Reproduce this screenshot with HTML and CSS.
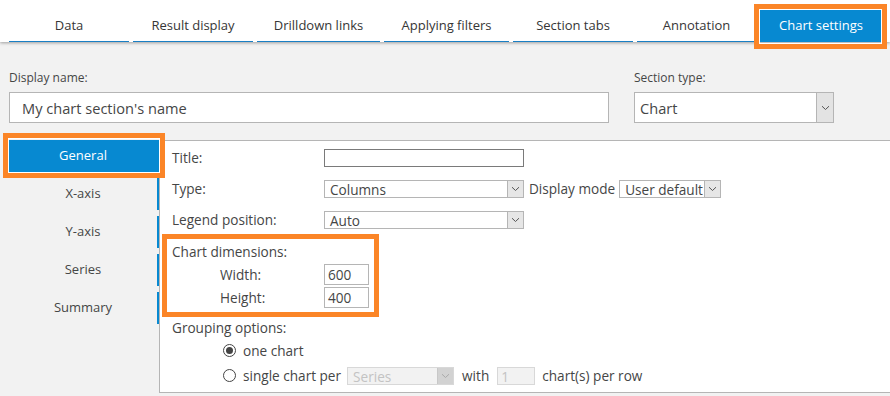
FILE: index.html
```html
<!DOCTYPE html>
<html>
<head>
<meta charset="utf-8">
<title>Chart settings</title>
<link rel="stylesheet" href="styles.css">
</head>
<body>
<div class="tabbar">
  <div class="tab tab-data">Data</div>
  <div class="tab tab-result">Result display</div>
  <div class="tab tab-drill">Drilldown links</div>
  <div class="tab tab-filters">Applying filters</div>
  <div class="tab tab-sections">Section tabs</div>
  <div class="tab tab-annot">Annotation</div>
  <div class="tab tab-chart active highlight">Chart settings</div>
</div>

<div class="page">
  <div class="fields">
    <div class="field name-field">
      <div class="field-label">Display name:</div>
      <div class="big-input">My chart section's name</div>
    </div>
    <div class="field type-field">
      <div class="field-label">Section type:</div>
      <div class="big-select">
        <span class="big-select-value">Chart</span>
        <span class="big-select-btn"><svg width="9" height="6" viewBox="0 0 9 6"><path d="M1 1.2 L4.5 4.5 L8 1.2" fill="none" stroke="#555" stroke-width="1"/></svg></span>
      </div>
    </div>
  </div>

  <div class="main">
    <nav class="sidebar">
      <div class="side-item active highlight-side">General</div>
      <div class="side-item">X-axis</div>
      <div class="side-item">Y-axis</div>
      <div class="side-item">Series</div>
      <div class="side-item">Summary</div>
    </nav>

    <div class="panel">
      <div class="row">
        <span class="row-label">Title:</span>
        <span class="text-input title-input"></span>
      </div>
      <div class="row">
        <span class="row-label">Type:</span>
        <span class="select wide-select">
          <span class="select-value">Columns</span>
          <span class="select-btn"><svg width="9" height="6" viewBox="0 0 9 6"><path d="M1 1.2 L4.5 4.5 L8 1.2" fill="none" stroke="#555" stroke-width="1"/></svg></span>
        </span>
        <span class="inline-label">Display mode</span>
        <span class="select mode-select">
          <span class="select-value">User default</span>
          <span class="select-btn"><svg width="9" height="6" viewBox="0 0 9 6"><path d="M1 1.2 L4.5 4.5 L8 1.2" fill="none" stroke="#555" stroke-width="1"/></svg></span>
        </span>
      </div>
      <div class="row">
        <span class="row-label">Legend position:</span>
        <span class="select wide-select">
          <span class="select-value">Auto</span>
          <span class="select-btn"><svg width="9" height="6" viewBox="0 0 9 6"><path d="M1 1.2 L4.5 4.5 L8 1.2" fill="none" stroke="#555" stroke-width="1"/></svg></span>
        </span>
      </div>

      <div class="dimensions">
        <div class="dim-title">Chart dimensions:</div>
        <div class="dim-row">
          <span class="dim-label">Width:</span>
          <span class="num-input">600</span>
        </div>
        <div class="dim-row dim-row-second">
          <span class="dim-label">Height:</span>
          <span class="num-input">400</span>
        </div>
      </div>

      <div class="group-title">Grouping options:</div>
      <div class="radio-row">
        <span class="radio checked"></span>
        <span>one chart</span>
      </div>
      <div class="radio-row radio-row-last">
        <span class="radio"></span>
        <span>single chart per</span>
        <span class="select disabled-select">
          <span class="select-value">Series</span>
          <span class="select-btn"><svg width="9" height="6" viewBox="0 0 9 6"><path d="M1 1.2 L4.5 4.5 L8 1.2" fill="none" stroke="#aaa" stroke-width="1"/></svg></span>
        </span>
        <span class="with-label">with</span>
        <span class="disabled-input">1</span>
        <span class="per-row">chart(s) per row</span>
      </div>
    </div>
  </div>
</div>
</body>
</html>
```

FILE: styles.css
```css
* {
  box-sizing: border-box;
  margin: 0;
  padding: 0;
}

body {
  font-family: "Open Sans", "Noto Sans", sans-serif;
  color: #454646;
  background: #f2f2f2;
  width: 890px;
  height: 396px;
  overflow: hidden;
}

/* ---------- Tabs ---------- */
.tabbar {
  position: relative;
  z-index: 1;
  height: 42px;
  background: #fff;
  display: flex;
  align-items: flex-end;
  gap: 4px;
  padding-left: 9px;
  box-shadow: 0 1px 3px rgba(0, 0, 0, 0.35);
}

.tab {
  height: 33px;
  border-bottom: 1px solid #1a7fc4;
  display: flex;
  align-items: center;
  justify-content: center;
  font-size: 13px;
  color: #363636;
  white-space: nowrap;
}

.tab-data { width: 120px; }
.tab-result { width: 120px; }
.tab-drill { width: 123px; }
.tab-filters { width: 125px; }
.tab-sections { width: 120px; }
.tab-annot { width: 119px; }
.tab-chart { width: 122px; }

.tab.active {
  background: #0789d1;
  border-bottom-color: #0789d1;
  color: #fff;
}

.highlight {
  position: relative;
}

.highlight::after {
  content: "";
  position: absolute;
  top: -5px;
  left: -6px;
  right: -5px;
  bottom: -8px;
  border: 5px solid #fb8527;
  box-shadow: inset 0 0 0 1px #fff;
}

/* ---------- Header fields ---------- */
.page {
  padding: 29px 0 0 9px;
}

.fields {
  display: flex;
  gap: 25px;
}

.field-label {
  font-size: 12px;
  line-height: 14px;
  height: 14px;
  margin-bottom: 7px;
  color: #454646;
}

.name-field { width: 600px; }
.type-field { width: 200px; }

.big-input {
  height: 31px;
  background: #fff;
  border: 1px solid #b5b5b5;
  font-size: 14.6px;
  padding-left: 12px;
  display: flex;
  align-items: center;
  color: #454646;
}

.big-select {
  height: 31px;
  background: #fff;
  border: 1px solid #b5b5b5;
  display: flex;
}

.big-select-value {
  flex: 1;
  display: flex;
  align-items: center;
  padding-left: 5px;
  font-size: 14.6px;
}

.big-select-btn {
  width: 17px;
  background: #e3e3e3;
  border-left: 1px solid #b5b5b5;
  display: flex;
  align-items: center;
  justify-content: center;
}

/* ---------- Main ---------- */
.main {
  display: flex;
  margin-top: 17px;
}

.sidebar {
  width: 150px;
  flex: none;
  display: flex;
  flex-direction: column;
  gap: 6px;
}

.side-item {
  height: 32px;
  display: flex;
  align-items: center;
  justify-content: center;
  font-size: 13px;
  color: #454646;
  border-right: 2px solid #0789d1;
  padding-bottom: 2px;
}

.side-item.active {
  background: #0789d1;
  color: #fff;
}

.highlight-side {
  position: relative;
}

.highlight-side::after {
  content: "";
  position: absolute;
  top: -7px;
  left: -6px;
  right: -8px;
  bottom: -6px;
  border: 5px solid #fb8527;
  box-shadow: inset 0 0 0 1px #fff;
}

.panel {
  flex: 1;
  background: #fff;
  border: 1px solid #b5b5b5;
  border-right: none;
  height: 253px;
  font-size: 13.6px;
  color: #454646;
}

.row {
  height: 31px;
  display: flex;
  align-items: center;
  padding-left: 12px;
  padding-top: 2px;
}

.row-label {
  width: 152px;
  flex: none;
}

.text-input {
  display: block;
  height: 18px;
  border: 1px solid #7a7a7a;
  background: #fff;
}

.title-input { width: 200px; }

.select {
  height: 18px;
  border: 1px solid #b5b5b5;
  background: #fff;
  display: flex;
  align-items: flex-end;
  font-size: 13.6px;
}

.select-value {
  flex: 1;
  padding-left: 5px;
  line-height: 14px;
  white-space: nowrap;
  min-width: 0;
}

.select-btn {
  width: 16px;
  height: 100%;
  flex: none;
  background: #e6e6e6;
  border-left: 1px solid #b5b5b5;
  display: flex;
  align-items: center;
  justify-content: center;
}

.wide-select { width: 200px; }

.inline-label {
  margin: 0 4px 0 5px;
}

.mode-select { width: 102px; }

/* ---------- Chart dimensions ---------- */
.dimensions {
  margin-left: 2px;
  width: 217px;
  border: 5px solid #fb8527;
  padding: 0 0 4px 5px;
}

.dim-title {
  height: 24px;
  display: flex;
  align-items: center;
}

.dim-row {
  height: 22px;
  display: flex;
  align-items: center;
  padding-left: 48px;
}

.dim-row-second {
  margin-top: 1px;
}

.dim-label {
  width: 104px;
  flex: none;
}

.num-input {
  width: 45px;
  height: 21px;
  border: 1px solid #b5b5b5;
  padding-left: 3px;
  line-height: 19px;
}

/* ---------- Grouping ---------- */
.group-title {
  height: 22px;
  display: flex;
  align-items: center;
  padding-left: 12px;
  padding-bottom: 2px;
}

.radio-row {
  height: 24px;
  display: flex;
  align-items: center;
  padding-left: 63px;
  padding-bottom: 1px;
}

.radio-row-last {
  padding-bottom: 0;
  padding-top: 1px;
}

.radio {
  width: 13px;
  height: 13px;
  border: 1px solid #444;
  border-radius: 50%;
  margin-right: 7px;
  display: flex;
  align-items: center;
  justify-content: center;
  flex: none;
}

.radio.checked::before {
  content: "";
  width: 7px;
  height: 7px;
  border-radius: 50%;
  background: #444;
}

.disabled-select {
  width: 107px;
  margin-left: 6px;
  background: #f2f2f2;
  border-color: #d8d8d8;
  color: #c3c3c3;
}

.disabled-select .select-btn {
  background: #d2d2d2;
  border-left-color: #c8c8c8;
}

.with-label {
  margin-left: 8px;
}

.disabled-input {
  width: 38px;
  height: 18px;
  margin-left: 8px;
  background: #f2f2f2;
  border: 1px solid #d8d8d8;
  color: #c3c3c3;
  padding-left: 3px;
  line-height: 17px;
}

.per-row {
  margin-left: 7px;
}
```
